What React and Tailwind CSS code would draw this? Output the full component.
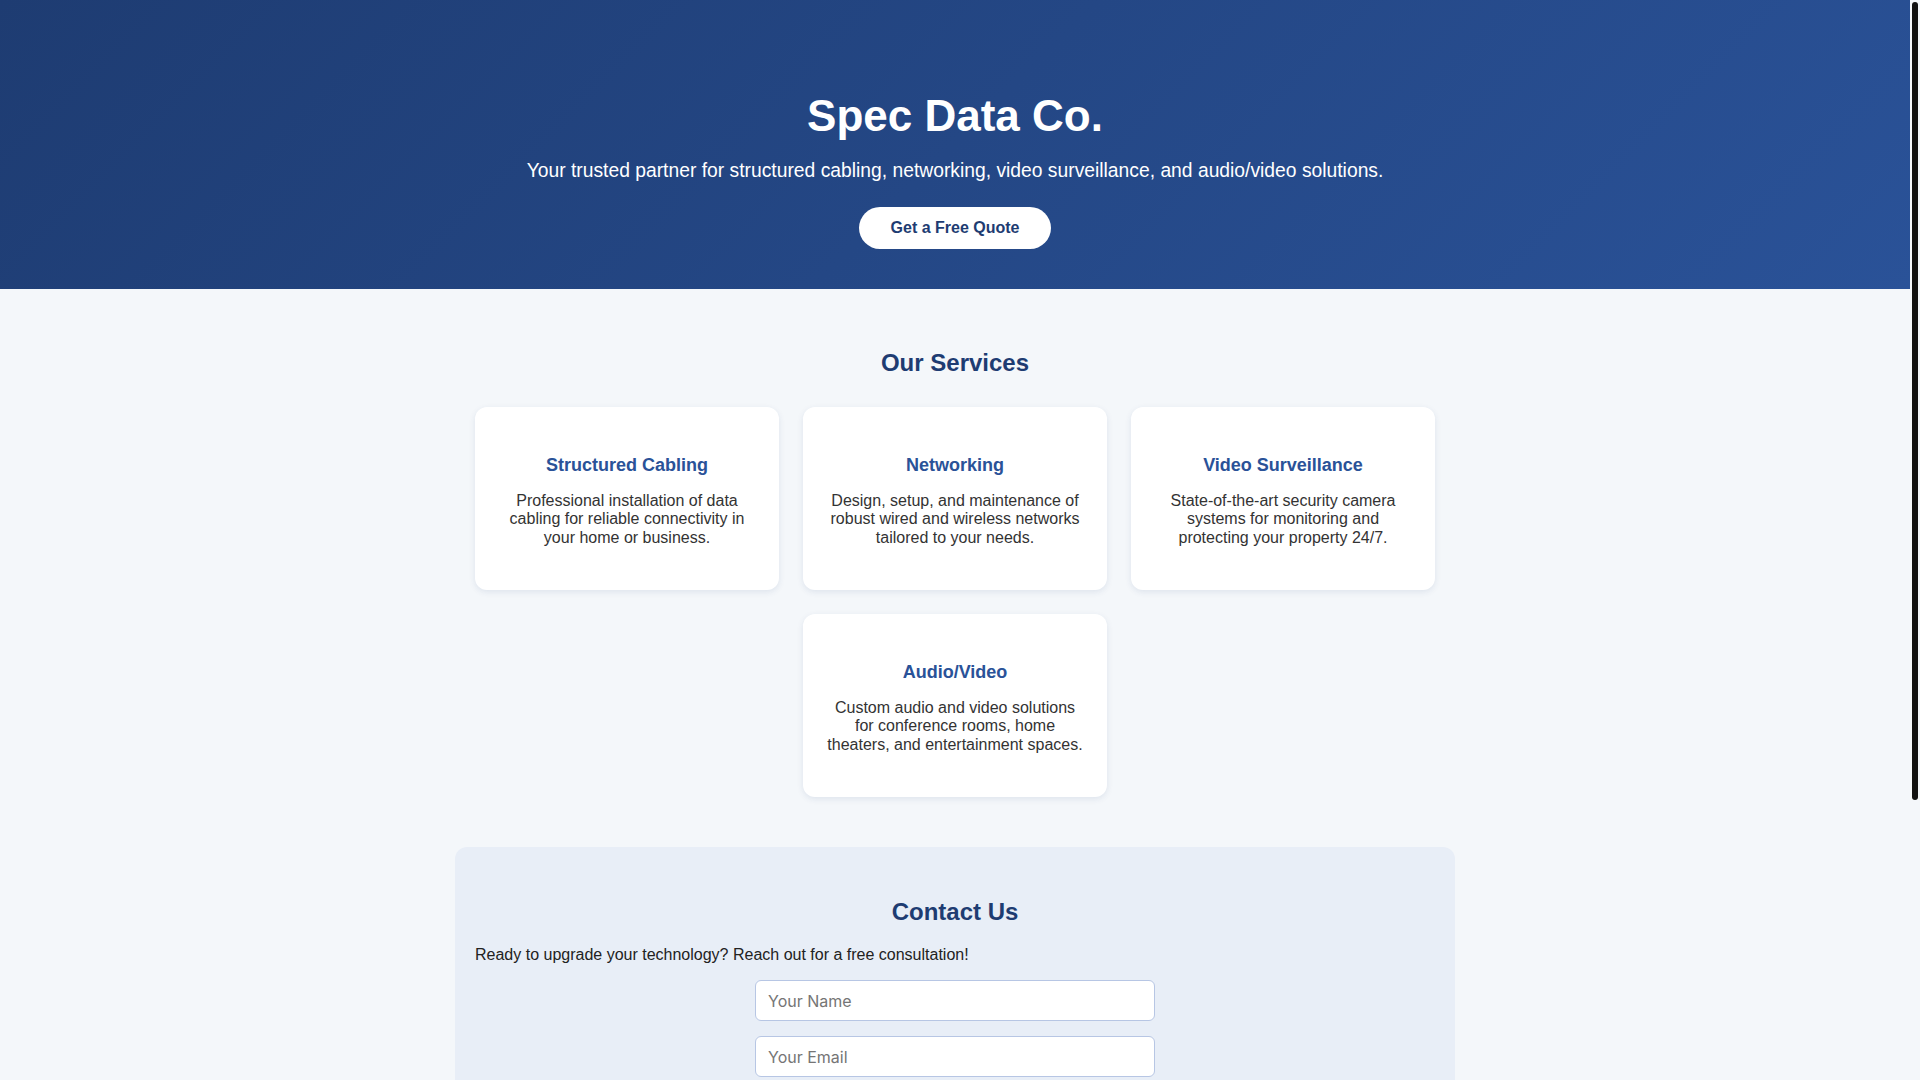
import React from "react";

const services = [
  {
    title: "Structured Cabling",
    text: "Professional installation of data cabling for reliable connectivity in your home or business.",
  },
  {
    title: "Networking",
    text: "Design, setup, and maintenance of robust wired and wireless networks tailored to your needs.",
  },
  {
    title: "Video Surveillance",
    text: "State-of-the-art security camera systems for monitoring and protecting your property 24/7.",
  },
  {
    title: "Audio/Video",
    text: "Custom audio and video solutions for conference rooms, home theaters, and entertainment spaces.",
  },
];

export default function App() {
  return (
    <div className="min-h-screen bg-[#f4f7fa] pr-[10px] font-['Liberation_Sans',Arial,sans-serif] text-[#333]">
      <header className="bg-[linear-gradient(135deg,#1e3c72,#2a5298)] text-white text-center pt-[91px] pb-[40px] px-5">
        <h1 className="text-[44px] font-bold leading-[50.6px]">Spec Data Co.</h1>
        <p className="mt-[18.5px] text-[19.3px] leading-[22px]">
          Your trusted partner for structured cabling, networking, video surveillance, and audio/video solutions.
        </p>
        <a
          href="#contact"
          className="inline-block mt-[25px] bg-white text-[#1e3c72] font-bold text-base leading-[18px] px-8 py-3 rounded-full"
        >
          Get a Free Quote
        </a>
      </header>

      <section className="max-w-[1000px] mx-auto px-5 pt-[60px]">
        <h2 className="text-center text-2xl leading-[27.6px] font-bold text-[#1e3c72]">Our Services</h2>
        <div className="mt-[30px] flex flex-wrap justify-center gap-6">
          {services.map((s) => (
            <div
              key={s.title}
              className="w-[304px] bg-white rounded-xl shadow-[0_2px_6px_rgba(30,60,114,0.10)] px-6 pt-12 pb-[43px] text-center"
            >
              <h3 className="text-lg leading-[21px] font-bold text-[#2a5298]">{s.title}</h3>
              <p className="mt-[16px] text-base leading-[18.4px] text-[#333]">{s.text}</p>
            </div>
          ))}
        </div>
      </section>

      <section
        id="contact"
        className="max-w-[1000px] mx-auto mt-[50px] bg-[#e8eef7] rounded-xl px-5 pt-[51px] pb-10"
      >
        <h2 className="text-center text-2xl leading-[27.6px] font-bold text-[#1e3c72]">Contact Us</h2>
        <p className="mt-5 text-base leading-[18.4px] text-[#222]">
          Ready to upgrade your technology? Reach out for a free consultation!
        </p>
        <form className="mt-[16px] flex flex-col items-center gap-[15px]">
          <input
            type="text"
            placeholder="Your Name"
            className="block w-[400px] h-[41px] px-3 bg-white border border-[#b7c6e4] rounded-md font-['Inter',sans-serif] text-base text-[#333] placeholder:text-[#757575] outline-none"
          />
          <input
            type="email"
            placeholder="Your Email"
            className="block w-[400px] h-[41px] px-3 bg-white border border-[#b7c6e4] rounded-md font-['Inter',sans-serif] text-base text-[#333] placeholder:text-[#757575] outline-none"
          />
          <textarea
            placeholder="Your Message"
            className="block w-[400px] h-[120px] px-3 py-[10px] bg-white border border-[#b7c6e4] rounded-md font-['Inter',sans-serif] text-base text-[#333] placeholder:text-[#757575] outline-none resize-none"
          />
          <button
            type="button"
            className="bg-[#2a5298] text-white font-bold text-base leading-[18px] px-8 py-3 rounded-full"
          >
            Send Message
          </button>
        </form>
      </section>

      <footer className="mt-[50px] bg-[#1e3c72] text-white text-center py-10 text-base leading-[18.4px]">
        © 2024 Spec Data Co. All rights reserved.
      </footer>

      <div className="fixed top-0 right-0 h-screen w-[10px] bg-[#f4f7fa]">
        <div className="mt-[2px] ml-[2px] w-[6px] h-[798px] rounded-full bg-[#111]" />
      </div>
    </div>
  );
}
